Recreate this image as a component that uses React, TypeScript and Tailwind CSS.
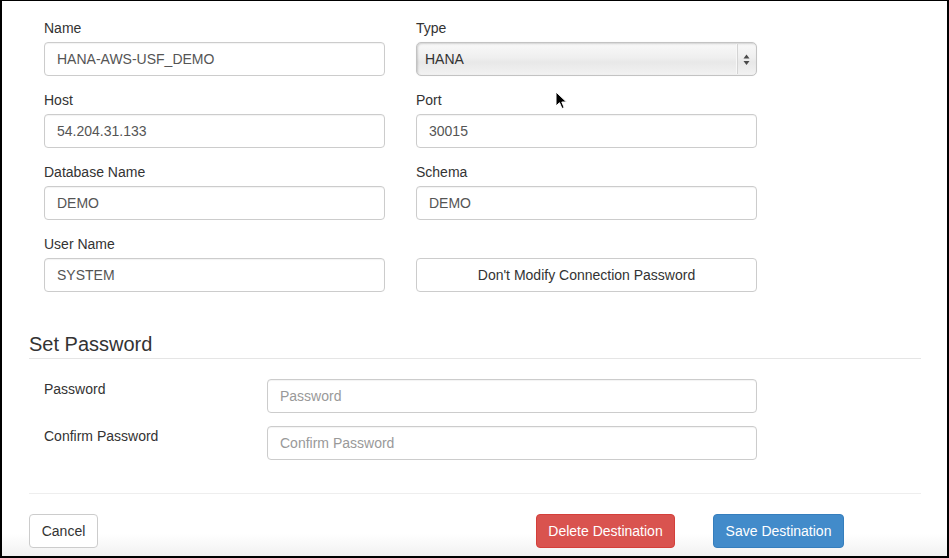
import React from "react";

const font = { fontFamily: '"Liberation Sans", Arial, Helvetica, sans-serif' };

function Field({ label, value, className = "" }: { label: string; value: string; className?: string }) {
  return (
    <div className={"w-[341px] " + className}>
      <div className="h-[22px] leading-[22px] text-[14px] text-[#333] mb-[3px]">{label}</div>
      <div className="h-[34px] rounded-[4px] border border-[#cccccc] bg-white px-[12px] flex items-center text-[14px] text-[#555] shadow-[inset_0_1px_1px_rgba(0,0,0,0.05)]">
        {value}
      </div>
    </div>
  );
}

function TypeSelect() {
  return (
    <div className="w-[341px]">
      <div className="h-[22px] leading-[22px] text-[14px] text-[#333] mb-[3px]">Type</div>
      <div className="relative h-[34px] rounded-[5px] border border-[#c3c3c3] bg-[linear-gradient(to_bottom,#f9f9f9_0%,#efefef_45%,#e8e8e8_60%,#f2f2f2_100%)] shadow-[inset_1px_1px_2px_rgba(0,0,0,0.16),0_0_1px_rgba(0,0,0,0.1)] flex items-center">
        <span className="pl-[8px] text-[14px] text-[#333]">HANA</span>
        <div className="absolute right-[18px] top-[1px] bottom-[1px] w-px bg-[#d4d4d4]" />
        <div className="absolute right-[19px] top-[1px] bottom-[1px] w-px bg-[#f8f8f8]" />
        <svg className="absolute right-[6px] top-[11px]" width="7" height="12" viewBox="0 0 7 12">
          <polygon points="3.5,0.5 6.5,4.5 0.5,4.5" fill="#4a4a4a" />
          <polygon points="0.5,7 6.5,7 3.5,11" fill="#4a4a4a" />
        </svg>
      </div>
    </div>
  );
}

export default function App() {
  return (
    <div
      style={font}
      className="relative w-[949px] h-[558px] box-border overflow-hidden border-black border-t border-l-2 border-r-2 border-b-2 bg-[linear-gradient(to_bottom,#ffffff_0%,#ffffff_96%,#f1f1f1_100%)]"
    >
      <div className="pt-[16px] pl-[42px]">
        <div className="flex gap-[31px] mb-[13px]">
          <Field label="Name" value="HANA-AWS-USF_DEMO" />
          <TypeSelect />
        </div>
        <div className="flex gap-[31px] mb-[13px]">
          <Field label="Host" value="54.204.31.133" />
          <Field label="Port" value="30015" />
        </div>
        <div className="flex gap-[31px] mb-[13px]">
          <Field label="Database Name" value="DEMO" />
          <Field label="Schema" value="DEMO" />
        </div>
        <div className="flex gap-[31px] items-end">
          <Field label="User Name" value="SYSTEM" />
          <button className="w-[341px] h-[34px] rounded-[4px] border border-[#cccccc] bg-white text-[14px] text-[#333] flex items-center justify-center">
            Don't Modify Connection Password
          </button>
        </div>
      </div>

      <div className="ml-[27px] w-[892px] mt-[41px] h-[26px] border-b border-[#e5e5e5] text-[20px] leading-[22px] text-[#333]">
        Set Password
      </div>

      <div className="mt-[20px] ml-[42px]">
        <div className="flex mb-[13px]">
          <div className="w-[223px] text-[14px] leading-[20px] text-[#333]">Password</div>
          <div className="w-[490px] h-[34px] rounded-[4px] border border-[#cccccc] px-[12px] flex items-center text-[14px] text-[#999] shadow-[inset_0_1px_1px_rgba(0,0,0,0.05)]">
            Password
          </div>
        </div>
        <div className="flex">
          <div className="w-[223px] text-[14px] leading-[20px] text-[#333]">Confirm Password</div>
          <div className="w-[490px] h-[34px] rounded-[4px] border border-[#cccccc] px-[12px] flex items-center text-[14px] text-[#999] shadow-[inset_0_1px_1px_rgba(0,0,0,0.05)]">
            Confirm Password
          </div>
        </div>
      </div>

      <div className="ml-[27px] w-[892px] mt-[33px] border-t border-[#eeeeee]" />

      <div className="ml-[27px] mt-[20px] flex">
        <button className="w-[69px] h-[34px] rounded-[4px] border border-[#cccccc] bg-white text-[14px] text-[#333]">
          Cancel
        </button>
        <button className="ml-[438px] w-[139px] h-[34px] rounded-[4px] border border-[#d43f3a] bg-[#d9534f] text-[14px] text-white">
          Delete Destination
        </button>
        <button className="ml-[38px] w-[131px] h-[34px] rounded-[4px] border border-[#357ebd] bg-[#428bca] text-[14px] text-white">
          Save Destination
        </button>
      </div>

      <svg className="absolute left-[553px] top-[90px]" width="13" height="19" viewBox="0 0 13 19">
        <path d="M1 1 L1 15 L4.5 11.7 L7 17.5 L9.2 16.6 L6.8 11 L11.5 11 Z" fill="#000" stroke="#fff" strokeWidth="1" strokeLinejoin="round" />
      </svg>
    </div>
  );
}
